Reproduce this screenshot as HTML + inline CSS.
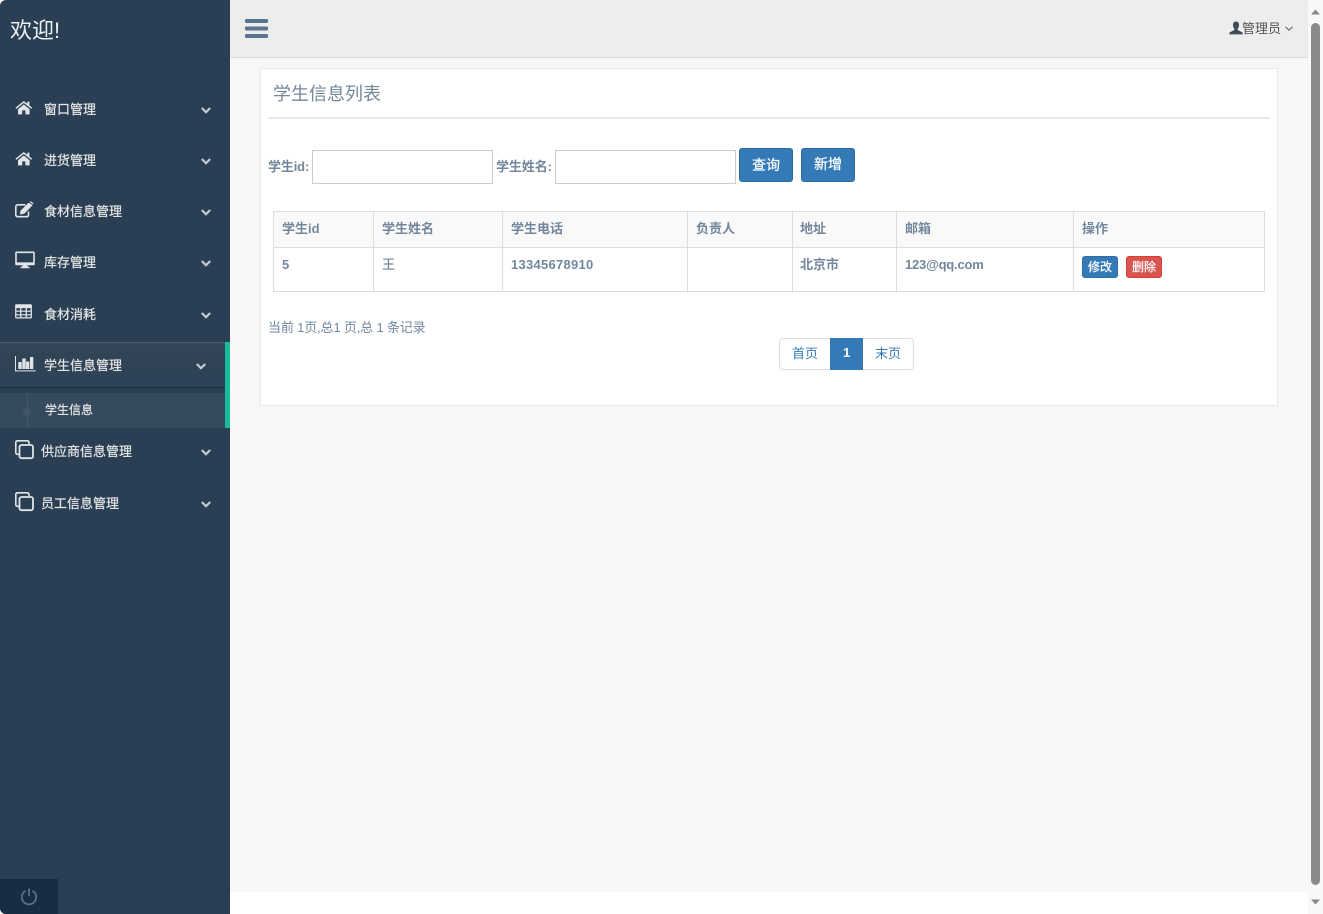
<!DOCTYPE html>
<html lang="zh-CN">
<head>
<meta charset="utf-8">
<title>学生信息</title>
<style>
html,body{margin:0;padding:0;width:1323px;height:914px;overflow:hidden;background:#fff}
body{position:relative;font-family:"Liberation Sans","Noto Sans CJK SC",sans-serif;font-size:13px;color:#73879C}
.a{position:absolute;white-space:nowrap}
.nav{color:#E7E7E7;font-size:13px;line-height:18px;-webkit-text-stroke:.2px #E7E7E7}
.b{font-weight:bold}
.line{position:absolute;background:#ddd}
svg{position:absolute;overflow:visible}
.ic{fill:#E2E5E8}
.st{fill:none;stroke:#E2E5E8}
.chev{fill:none;stroke:#C4CBD2;stroke-width:2.2}
.th{font-weight:bold;font-size:13px;line-height:18px;color:#73879C}
.input{position:absolute;box-sizing:border-box;background:#fff;border:1px solid #ccc;top:150px;height:34px;width:181px}
.btn{position:absolute;box-sizing:border-box;background:#337ab7;border:1px solid #2e6da4;border-radius:3px;color:#fff;text-align:center;-webkit-text-stroke:.25px #fff}
</style>
</head>
<body>
<div class="a" style="left:230px;top:58px;width:1078px;height:834px;background:#F7F7F7"></div>
<div class="a" style="left:230px;top:0;width:1078px;height:57px;background:#EDEDED;border-bottom:1px solid #D9DEE4"></div>

<!-- sidebar -->
<div class="a" style="left:0;top:0;width:230px;height:914px;background:#2A3F54;border-top-left-radius:6px;border-bottom-left-radius:6px"></div>
<div class="a" style="left:10px;top:15px;font-size:22px;line-height:32px;color:#ECF0F1">欢迎!</div>

<svg style="left:15px;top:100px" width="18" height="16" viewBox="0 0 18 16"><path class="ic" d="M8.8 1 0.4 7.8 1.3 8.9 8.8 2.9 16.3 8.9 17.2 7.8 14.4 5.5V1.6H12.3V3.8ZM3 9.2V14.4H7.2V10.4H10.4V14.4H14.6V9.2L8.8 4.5Z"/></svg>
<div class="a nav" style="left:44px;top:101px">窗口管理</div>
<svg style="left:201px;top:107px" width="10" height="8"><path class="chev" d="M0.8 1 5 5.2 9.2 1"/></svg>

<svg style="left:15px;top:151px" width="18" height="16" viewBox="0 0 18 16"><path class="ic" d="M8.8 1 0.4 7.8 1.3 8.9 8.8 2.9 16.3 8.9 17.2 7.8 14.4 5.5V1.6H12.3V3.8ZM3 9.2V14.4H7.2V10.4H10.4V14.4H14.6V9.2L8.8 4.5Z"/></svg>
<div class="a nav" style="left:44px;top:152px">进货管理</div>
<svg style="left:201px;top:158px" width="10" height="8"><path class="chev" d="M0.8 1 5 5.2 9.2 1"/></svg>

<svg style="left:15px;top:202px" width="19" height="16" viewBox="0 0 19 16"><path class="st" stroke-width="1.6" d="M13.5 9.5V12.5Q13.5 14.7 11.5 14.7H3Q0.8 14.7 0.8 12.5V5Q0.8 2.8 3 2.8H10.5"/><path class="ic" d="M5.5 8.6 13.8 0.6 17.6 3.2 9.4 11.6 5 12.6ZM14.6 0 15.6 -0.8 18.6 1.4 18 2.4Z"/></svg>
<div class="a nav" style="left:44px;top:203px">食材信息管理</div>
<svg style="left:201px;top:209px" width="10" height="8"><path class="chev" d="M0.8 1 5 5.2 9.2 1"/></svg>

<svg style="left:15px;top:251px" width="20" height="18" viewBox="0 0 20 18"><path class="ic" d="M1.5 0.5H18.5Q19.8 0.5 19.8 1.8V13Q19.8 14.3 18.5 14.3H12.6V15.7H14.5V17.2H5.5V15.7H7.4V14.3H1.5Q0.2 14.3 0.2 13V1.8Q0.2 0.5 1.5 0.5ZM1.8 2.1V11.4H18.2V2.1Z"/></svg>
<div class="a nav" style="left:44px;top:254px">库存管理</div>
<svg style="left:201px;top:260px" width="10" height="8"><path class="chev" d="M0.8 1 5 5.2 9.2 1"/></svg>

<svg style="left:15px;top:304px" width="17" height="15" viewBox="0 0 17 15"><path class="ic" fill-rule="evenodd" d="M1.2 0.3H15.8Q16.9 0.3 16.9 1.4V13.4Q16.9 14.5 15.8 14.5H1.2Q0.1 14.5 0.1 13.4V1.4Q0.1 0.3 1.2 0.3ZM1.4 4.1V6.6H5.1V4.1ZM6.4 4.1V6.6H10.6V4.1ZM11.9 4.1V6.6H15.6V4.1ZM1.4 7.8V10.2H5.1V7.8ZM6.4 7.8V10.2H10.6V7.8ZM11.9 7.8V10.2H15.6V7.8ZM1.4 11.4V13.2H5.1V11.4ZM6.4 11.4V13.2H10.6V11.4ZM11.9 11.4V13.2H15.6V11.4Z"/></svg>
<div class="a nav" style="left:44px;top:306px">食材消耗</div>
<svg style="left:201px;top:312px" width="10" height="8"><path class="chev" d="M0.8 1 5 5.2 9.2 1"/></svg>

<!-- active -->
<div class="a" style="left:0;top:342px;width:225px;height:45px;background:linear-gradient(#334556,#2C4257);border-top:1px solid #4a5b6c;box-sizing:border-box;border-bottom:0"></div>
<div class="a" style="left:0;top:387px;width:225px;height:1px;background:#1f3042"></div>
<div class="a" style="left:0;top:388px;width:225px;height:5px;background:#2A3F54"></div>
<div class="a" style="left:0;top:393px;width:225px;height:35px;background:rgba(255,255,255,.06)"></div>
<div class="a" style="left:225px;top:342px;width:5px;height:86px;background:#1ABB9C"></div>
<div class="a" style="left:27px;top:393px;width:1px;height:35px;background:#425668"></div>
<div class="a" style="left:23px;top:408px;width:8px;height:8px;border-radius:50%;background:#425668"></div>

<svg style="left:15px;top:356px" width="21" height="16" viewBox="0 0 21 16"><path class="ic" d="M0 0H1V14.4H20.8V15.4H0ZM3.3 6H6.7V13H3.3ZM7.3 2.5H10.7V13H7.3ZM11 5.5H14.3V13H11ZM15 1H18.3V13H15Z"/></svg>
<div class="a nav" style="left:44px;top:357px">学生信息管理</div>
<svg style="left:196px;top:363px" width="10" height="8"><path class="chev" d="M0.8 1 5 5.2 9.2 1"/></svg>
<div class="a nav" style="left:45px;top:401px;font-size:12px">学生信息</div>

<svg style="left:15px;top:440px" width="19" height="19" viewBox="0 0 19 19"><path class="st" stroke-width="1.6" d="M4 14.3H2.5Q0.8 14.3 0.8 12.5V2.7Q0.8 0.8 2.5 0.8H12Q14 0.8 14 2.7V4"/><rect class="st" stroke-width="1.8" x="4.5" y="5" width="13.5" height="13.2" rx="2"/></svg>
<div class="a nav" style="left:41px;top:443px">供应商信息管理</div>
<svg style="left:201px;top:449px" width="10" height="8"><path class="chev" d="M0.8 1 5 5.2 9.2 1"/></svg>

<svg style="left:15px;top:492px" width="19" height="19" viewBox="0 0 19 19"><path class="st" stroke-width="1.6" d="M4 14.3H2.5Q0.8 14.3 0.8 12.5V2.7Q0.8 0.8 2.5 0.8H12Q14 0.8 14 2.7V4"/><rect class="st" stroke-width="1.8" x="4.5" y="5" width="13.5" height="13.2" rx="2"/></svg>
<div class="a nav" style="left:41px;top:495px">员工信息管理</div>
<svg style="left:201px;top:501px" width="10" height="8"><path class="chev" d="M0.8 1 5 5.2 9.2 1"/></svg>

<div class="a" style="left:0;top:879px;width:58px;height:35px;background:#172D44;border-bottom-left-radius:6px"></div>
<svg style="left:20px;top:888px" width="18" height="18" viewBox="0 0 18 18"><path d="M5.6 2.8A7.2 7.2 0 1 0 12.4 2.8" fill="none" stroke="#5A738E" stroke-width="1.7"/><path d="M9 0.5V8" stroke="#5A738E" stroke-width="1.7"/></svg>

<!-- top nav -->
<svg style="left:245px;top:19px" width="23" height="20" viewBox="0 0 23 20"><rect y="0" width="23" height="4" rx="1.2" fill="#5A738E"/><rect y="7.5" width="23" height="4" rx="1.2" fill="#5A738E"/><rect y="15" width="23" height="4" rx="1.2" fill="#5A738E"/></svg>
<svg style="left:1229px;top:21px" width="14" height="14" viewBox="0 0 14 14"><path fill="#3d4b59" d="M7 0.5C9.2 0.5 10.2 2.2 10 4.5 9.9 6 9.2 7.2 8.7 7.8V9L13 11.2Q13.7 11.6 13.7 12.4V13.4H0.3V12.4Q0.3 11.6 1 11.2L5.3 9V7.8C4.8 7.2 4.1 6 4 4.5 3.8 2.2 4.8 0.5 7 0.5Z"/></svg>
<div class="a" style="left:1242px;top:20px;font-size:13px;line-height:18px;color:#515356">管理员</div>
<svg style="left:1285px;top:26px" width="8" height="6"><path d="M0.5 0.8 4 4.2 7.5 0.8" fill="none" stroke="#515356" stroke-width="1"/></svg>

<!-- panel -->
<div class="a" style="left:260px;top:68px;width:1018px;height:338px;box-sizing:border-box;background:#fff;border:1px solid #E6E9ED"></div>
<div class="a" style="left:273px;top:82px;font-size:18px;line-height:25px;color:#73879C">学生信息列表</div>
<div class="a" style="left:268px;top:117px;width:1002px;height:2px;background:#E6E9ED"></div>

<div class="a b" style="left:268px;top:158px;line-height:18px;letter-spacing:-.15px">学生id:</div>
<div class="input" style="left:312px"></div>
<div class="a b" style="left:496px;top:158px;line-height:18px;letter-spacing:-.1px">学生姓名:</div>
<div class="input" style="left:555px"></div>
<div class="btn" style="left:739px;top:148px;width:54px;height:34px;line-height:32px;font-size:14px">查询</div>
<div class="btn" style="left:801px;top:148px;width:54px;height:34px;line-height:30px;font-size:14px">新增</div>

<!-- table -->
<div class="a" style="left:273px;top:211px;width:991px;height:37px;background:#F9F9F9"></div>
<div class="line" style="left:273px;top:211px;width:992px;height:1px"></div>
<div class="line" style="left:273px;top:247px;width:992px;height:1px"></div>
<div class="line" style="left:273px;top:291px;width:992px;height:1px"></div>
<div class="line" style="left:273px;top:211px;width:1px;height:81px"></div>
<div class="line" style="left:373px;top:211px;width:1px;height:81px"></div>
<div class="line" style="left:502px;top:211px;width:1px;height:81px"></div>
<div class="line" style="left:687px;top:211px;width:1px;height:81px"></div>
<div class="line" style="left:792px;top:211px;width:1px;height:81px"></div>
<div class="line" style="left:896px;top:211px;width:1px;height:81px"></div>
<div class="line" style="left:1073px;top:211px;width:1px;height:81px"></div>
<div class="line" style="left:1264px;top:211px;width:1px;height:81px"></div>

<div class="a th" style="left:282px;top:220px">学生id</div>
<div class="a th" style="left:382px;top:220px">学生姓名</div>
<div class="a th" style="left:511px;top:220px">学生电话</div>
<div class="a th" style="left:696px;top:220px">负责人</div>
<div class="a th" style="left:800px;top:220px">地址</div>
<div class="a th" style="left:905px;top:220px">邮箱</div>
<div class="a th" style="left:1082px;top:220px">操作</div>

<div class="a th" style="left:282px;top:256px">5</div>
<div class="a th" style="left:382px;top:256px;font-weight:normal;-webkit-text-stroke:.2px #73879C">王</div>
<div class="a th" style="left:511px;top:256px;letter-spacing:.27px">13345678910</div>
<div class="a th" style="left:800px;top:256px">北京市</div>
<div class="a th" style="left:905px;top:256px;letter-spacing:-.2px">123@qq.com</div>
<div class="btn" style="left:1082px;top:256px;width:36px;height:22px;line-height:20px;font-size:12px">修改</div>
<div class="btn" style="left:1126px;top:256px;width:36px;height:22px;line-height:20px;font-size:12px;background:#d9534f;border-color:#d43f3a">删除</div>

<div class="a" style="left:268px;top:319px;line-height:18px;letter-spacing:-.16px">当前 1页,总1 页,总 1 条记录</div>

<!-- pagination -->
<div class="a" style="left:779px;top:338px;width:135px;height:32px;box-sizing:border-box;background:#fff;border:1px solid #ddd;border-radius:4px"></div>
<div class="a" style="left:830px;top:338px;width:33px;height:32px;background:#337ab7"></div>
<div class="a" style="left:792px;top:345px;line-height:18px;color:#337ab7">首页</div>
<div class="a" style="left:843px;top:344px;line-height:18px;color:#fff;font-weight:bold">1</div>
<div class="a" style="left:875px;top:345px;line-height:18px;color:#337ab7">末页</div>

<!-- scrollbar -->
<div class="a" style="left:1308px;top:0;width:15px;height:914px;background:#F8F8F8"></div>
<div class="a" style="left:1311px;top:23px;width:9px;height:862px;background:#8A8A8A;border-radius:5px"></div>
<svg style="left:1311px;top:9px" width="9" height="6"><path d="M4.5 0.5 9 5.5H0Z" fill="#8A8A8A"/></svg>
<svg style="left:1311px;top:899px" width="9" height="6"><path d="M0 0.5H9L4.5 5.5Z" fill="#8A8A8A"/></svg>
</body>
</html>
